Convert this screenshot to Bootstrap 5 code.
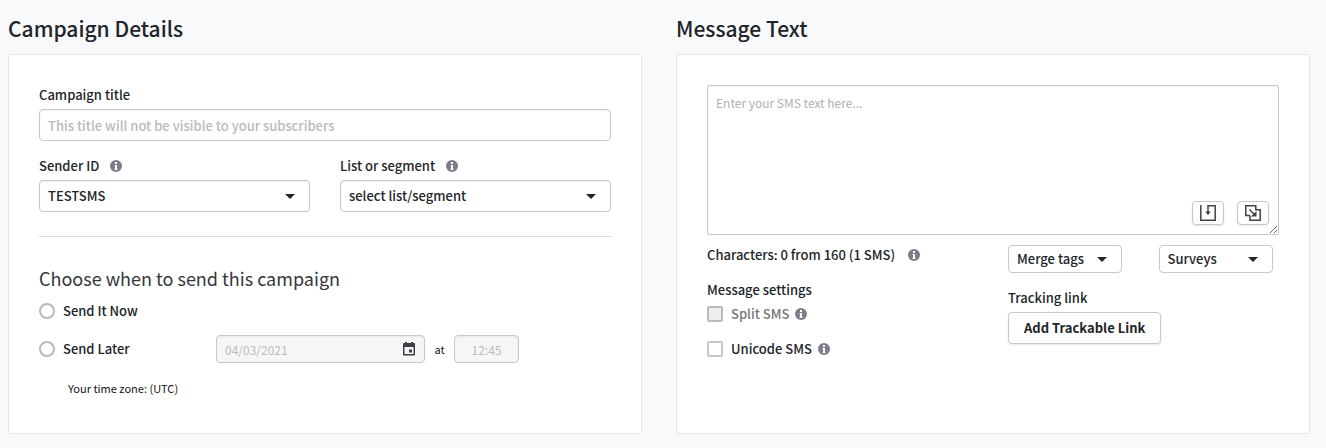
<!DOCTYPE html>
<html lang="en">
<head>
<meta charset="utf-8">
<meta name="viewport" content="width=device-width, initial-scale=1">
<title>SMS campaign</title>
<link href="https://cdn.jsdelivr.net/npm/bootstrap@5.3.0/dist/css/bootstrap.min.css" rel="stylesheet">
<style>
  body {
    font-family: "Noto Sans CJK SC", "Source Sans Pro", "Open Sans", sans-serif;
    font-size: 13px;
    font-weight: 500;
    line-height: 20px;
    color: #212529;
    background: #f8f9fb;
  }
  .page-main { padding: 13px 16px 13px 8px; }
  .page-cols { --bs-gutter-x: 34px; }
  .half-cols { --bs-gutter-x: 30px; }
  .page-title { font-size: 21px; line-height: 30px; margin: 0 0 11px; font-weight: 500; }
  .panel { background: #fff; border: 1px solid #e3e4e5; border-radius: 3px; padding: 30px 30px 37px; }
  .sub-title { font-size: 18px; line-height: 24px; margin: 29px 0 11px; font-weight: 400; color: #34373c; }
  .rule { margin: 24px 0 0; border-color: #dcdcdc; opacity: 1; }
  .stack { margin-bottom: 15px; }
  .field-label { display: block; margin-bottom: 4px; }
  .field-label svg { margin-left: 8px; }
  .info { width: 12px; height: 12px; flex: none; display: inline-block; vertical-align: -1px; }
  .info-near { margin-left: 6px; }
  .info-far { margin-left: 10px; }
  .form-control, .form-select {
    height: 32px; padding: 0 8px; font-size: 13px; font-weight: 500; line-height: 20px; color: #212529;
    border-color: #c8c8c8; border-radius: 4px;
    box-shadow: inset 0 1px 2px rgba(0,0,0,.06);
  }
  .form-control::placeholder { color: #bababa; opacity: 1; }
  .form-select {
    background-image: url("data:image/svg+xml,%3csvg xmlns='http://www.w3.org/2000/svg' viewBox='0 0 10 5'%3e%3cpath fill='%23212529' d='M0 0h10L5 5z'/%3e%3c/svg%3e");
    background-size: 10px 5px; background-position: right 14px center;
  }
  .form-control.short { height: 28px; font-size: 12px; font-weight: 400; }
  .form-control:disabled { background: #f6f6f6; color: #bcbcbc; }
  .send-later { margin-top: 14px; }
  .send-name { width: 177px; }
  .date-box { width: 209px; position: relative; }
  .date-box svg { position: absolute; right: 10px; top: 7px; width: 12px; height: 14px; }
  .time-box { width: 65px; }
  .tiny { font-size: 11px; line-height: 16px; font-weight: 400; color: #111; }
  .at-label { width: 29px; text-align: center; }
  .zone { margin: 17px 0 0 29px; }
  .form-check-input { width: 16px; height: 16px; margin: 0; border: 2px solid #b9b9b9; flex: none; }
  .form-check-input[type=checkbox] { border-radius: 2px; border-color: #c8c8c8; }
  .form-check-input[type=checkbox]:disabled { background: #eee; opacity: 1; border-color: #bbb; }
  .form-check-input:disabled ~ .muted { color: #74777a; opacity: 1; }
  .sms-box { position: relative; margin-bottom: 10px; }
  .sms-box textarea { height: 150px; padding: 7px 8px; font-size: 12px; font-weight: 400; border-radius: 2px; display: block; }
  .sms-box textarea::placeholder { color: #b0b0b0; }
  .sms-tools { position: absolute; right: 10px; bottom: 10px; gap: 13px; }
  .btn-plain {
    --bs-btn-border-color: #c8c8c8; --bs-btn-bg: #fff; --bs-btn-color: #212529; --bs-btn-hover-border-color: #999;
    --bs-btn-border-radius: 4px; --bs-btn-font-size: 13px; --bs-btn-font-weight: 500; --bs-btn-line-height: 20px; --bs-btn-padding-y: 0;
  }
  .btn-tool { width: 32px; height: 24px; padding: 0; box-shadow: 0 1px 2px rgba(0,0,0,.1); }
  .btn-tool svg { width: 16px; height: 16px; display: block; margin: auto; }
  .btn-menu { width: 114px; height: 28px; padding: 0 14px 0 8px; margin-bottom: 15px; }
  .btn-menu::after { border-top: 5px solid; border-left: 5px solid transparent; border-right: 5px solid transparent; margin: 0; }
  .btn-add { height: 32px; padding: 0 15px; font-weight: 700; box-shadow: 0 1px 2px rgba(0,0,0,.1); }
</style>
</head>
<body>
<svg class="d-none" aria-hidden="true">
  <symbol id="info" viewBox="0 0 12 12">
    <circle cx="6" cy="6" r="6" fill="#817a8b"/>
    <path fill="#fff" d="M5 2h2v2H5zM4.500 5H7v4h.5v1h-3V9H5V6h-.5z"/>
  </symbol>
</svg>
<main class="container-fluid page-main">
  <div class="row page-cols">
    <section class="col-6 d-flex flex-column">
      <h1 class="page-title">Campaign Details</h1>
      <form class="panel flex-grow-1">
        <div class="stack">
          <label class="field-label" for="title">Campaign title</label>
          <input class="form-control" id="title" type="text" placeholder="This title will not be visible to your subscribers">
        </div>
        <div class="row half-cols">
          <div class="col-6">
            <label class="field-label" for="sender">Sender ID <svg class="info"><use href="#info"/></svg></label>
            <select class="form-select" id="sender"><option>TESTSMS</option></select>
          </div>
          <div class="col-6">
            <label class="field-label" for="list">List or segment <svg class="info"><use href="#info"/></svg></label>
            <select class="form-select" id="list"><option>select list/segment</option></select>
          </div>
        </div>
        <hr class="rule">
        <h2 class="sub-title">Choose when to send this campaign</h2>
        <div class="d-flex align-items-center gap-2">
          <input class="form-check-input" type="radio" name="when" id="now">
          <label for="now">Send It Now</label>
        </div>
        <div class="d-flex align-items-center send-later">
          <div class="d-flex align-items-center gap-2 send-name">
            <input class="form-check-input" type="radio" name="when" id="later">
            <label for="later">Send Later</label>
          </div>
          <div class="date-box">
            <input class="form-control short" type="text" value="04/03/2021" aria-label="Date" disabled>
            <svg viewBox="0 0 12 14" aria-hidden="true"><path fill="#3c4046" fill-rule="evenodd" d="M2 0h2v1h4V0h2v1h1a1 1 0 0 1 1 1v10.500a1 1 0 0 1-1 1H1a1 1 0 0 1-1-1V2a1 1 0 0 1 1-1h1zM1.500 5v7h9V5zM6 7.500h3v3H6z"/></svg>
          </div>
          <label class="tiny at-label" for="time">at</label>
          <input class="form-control short time-box text-center" id="time" type="text" value="12:45" disabled>
        </div>
        <p class="tiny zone">Your time zone: (UTC)</p>
      </form>
    </section>
    <section class="col-6 d-flex flex-column">
      <h1 class="page-title">Message Text</h1>
      <form class="panel flex-grow-1">
        <div class="sms-box">
          <textarea class="form-control" aria-label="SMS text" placeholder="Enter your SMS text here..."></textarea>
          <div class="d-flex sms-tools">
            <button class="btn btn-plain btn-tool" type="button" aria-label="Insert">
              <svg viewBox="0 0 16 16" fill="none" stroke="#3f4248" stroke-width="1.500"><path d="M.8 0v15.200h14.400V.8H8v7"/><path d="M5 6.500h6l-3 3.500z" fill="#3f4248" stroke="none"/></svg>
            </button>
            <button class="btn btn-plain btn-tool" type="button" aria-label="Duplicate">
              <svg viewBox="0 0 16 16" fill="none" stroke="#3f4248" stroke-width="1.500"><path d="M5 10.500H.8V.8h10v4h4.400v10.400H5v-4.700"/><path d="M4.500 4.500l5 5"/><path d="M11.500 6v5.500H6z" fill="#3f4248" stroke="none"/></svg>
            </button>
          </div>
        </div>
        <div class="row half-cols">
          <div class="col-6">
            <div class="stack">Characters: 0 from 160 (1 SMS) <svg class="info info-far"><use href="#info"/></svg></div>
            <div class="field-label">Message settings</div>
            <div class="d-flex align-items-center stack">
              <input class="form-check-input me-2" type="checkbox" id="split" disabled>
              <label class="muted" for="split">Split SMS</label>
              <svg class="info info-near"><use href="#info"/></svg>
            </div>
            <div class="d-flex align-items-center">
              <input class="form-check-input me-2" type="checkbox" id="unicode">
              <label for="unicode">Unicode SMS</label>
              <svg class="info info-near"><use href="#info"/></svg>
            </div>
          </div>
          <div class="col-6">
            <div class="row half-cols">
              <div class="col-6"><button class="btn btn-plain btn-menu dropdown-toggle d-flex align-items-center justify-content-between" type="button">Merge tags</button></div>
              <div class="col-6"><button class="btn btn-plain btn-menu dropdown-toggle d-flex align-items-center justify-content-between" type="button">Surveys</button></div>
            </div>
            <div class="field-label">Tracking link</div>
            <button class="btn btn-plain btn-add" type="button">Add Trackable Link</button>
          </div>
        </div>
      </form>
    </section>
  </div>
</main>
<script src="https://cdn.jsdelivr.net/npm/bootstrap@5.3.0/dist/js/bootstrap.bundle.min.js"></script>
</body>
</html>
